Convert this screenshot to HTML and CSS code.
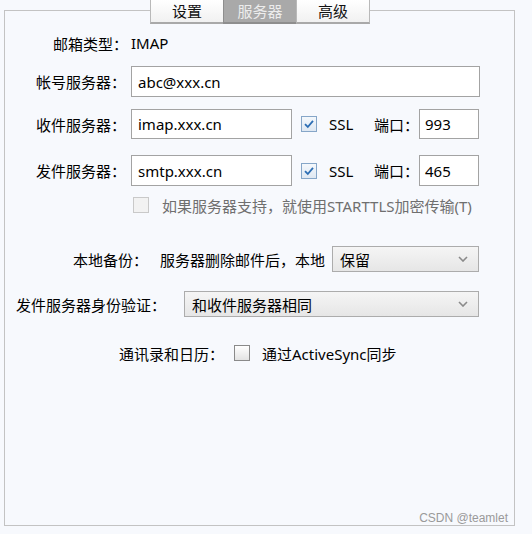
FILE: index.html
```html
<!DOCTYPE html>
<html lang="zh-CN">
<head>
<meta charset="utf-8">
<title>服务器设置</title>
<link rel="stylesheet" href="styles.css">
</head>
<body>
<div class="page">
  <div class="tabs">
    <div class="tab">设置</div>
    <div class="tab active">服务器</div>
    <div class="tab">高级</div>
  </div>
  <div class="frame">
    <div class="row r1">
      <span class="lbl w1">邮箱类型：</span>
      <span class="val">IMAP</span>
    </div>
    <div class="row r2">
      <span class="lbl w1">帐号服务器：</span>
      <div class="input wide h31">abc@xxx.cn</div>
    </div>
    <div class="row r3">
      <span class="lbl w1">收件服务器：</span>
      <div class="input host h30">imap.xxx.cn</div>
      <span class="cb checked"><svg viewBox="0 0 16 16" width="16" height="16"><path d="M4 8.2 L6.8 11 L12 4.8" fill="none" stroke="#2d6eb4" stroke-width="1.8"/></svg></span>
      <span class="ssl">SSL</span>
      <span class="port-lbl">端口：</span>
      <div class="input port h30">993</div>
    </div>
    <div class="row r4">
      <span class="lbl w1">发件服务器：</span>
      <div class="input host h31">smtp.xxx.cn</div>
      <span class="cb checked"><svg viewBox="0 0 16 16" width="16" height="16"><path d="M4 8.2 L6.8 11 L12 4.8" fill="none" stroke="#2d6eb4" stroke-width="1.8"/></svg></span>
      <span class="ssl">SSL</span>
      <span class="port-lbl">端口：</span>
      <div class="input port h31">465</div>
    </div>
    <div class="row r5">
      <span class="cb disabled"></span>
      <span class="dim">如果服务器支持，就使用STARTTLS加密传输(T)</span>
    </div>
    <div class="row r6">
      <span class="lbl w6">本地备份：</span>
      <span class="txt">服务器删除邮件后，本地</span>
      <div class="select sel6"><span>保留</span><svg class="chev" viewBox="0 0 10 6" width="10" height="6"><path d="M1 1 L5 5 L9 1" fill="none" stroke="#8a8a8a" stroke-width="1.6"/></svg></div>
    </div>
    <div class="row r7">
      <span class="lbl w7">发件服务器身份验证：</span>
      <div class="select sel7"><span>和收件服务器相同</span><svg class="chev" viewBox="0 0 10 6" width="10" height="6"><path d="M1 1 L5 5 L9 1" fill="none" stroke="#8a8a8a" stroke-width="1.6"/></svg></div>
    </div>
    <div class="row r8">
      <span class="lbl w8">通讯录和日历：</span>
      <span class="cb plain"></span>
      <span class="txt">通过ActiveSync同步</span>
    </div>
    <div class="mark">CSDN @teamlet</div>
  </div>
</div>
</body>
</html>
```
FILE: styles.css
```css
html, body {
  margin: 0;
  padding: 0;
  background: #f7f9fd;
}
body {
  font-family: "Noto Sans", "Noto Sans CJK SC", sans-serif;
  font-size: 15px;
  color: #000;
  width: 532px;
  height: 534px;
  overflow: hidden;
}
.page {
  padding-left: 4px;
}
.tabs {
  display: flex;
  margin-left: 146px;
  height: 24px;
  margin-bottom: -14px;
  position: relative;
  z-index: 1;
}
.tab {
  box-sizing: border-box;
  width: 74px;
  height: 24px;
  display: flex;
  align-items: center;
  justify-content: center;
  background: linear-gradient(#ffffff, #f1f1f1);
  border: 1px solid #b9b9b9;
  border-top: none;
  border-bottom: 2px solid #a9a9a9;
  margin-left: -1px;
  color: #111;
  font-size: 15px;
  line-height: 1;
}
.tab:first-child { margin-left: 0; width: 74px; }
.tab.active {
  background: #a9a9a9;
  color: #ececec;
  border-color: #8e8e8e;
  border-bottom-color: #8e8e8e;
}
.frame {
  box-sizing: border-box;
  width: 511px;
  height: 516px;
  border: 1px solid #c3c3c3;
  display: flex;
  flex-direction: column;
}
.row {
  display: flex;
  align-items: center;
  flex-shrink: 0;
}
.lbl {
  text-align: right;
  flex-shrink: 0;
}
.w1 { width: 121px; padding-right: 5px; }
.r1 { margin-top: 20px; height: 24px; }
.r1 .lbl { text-align: left; padding-left: 48px; width: 78px; padding-right: 0; }
.r2 { margin-top: 11px; }
.r3 { margin-top: 12px; }
.r4 { margin-top: 16px; }
.r5 { margin-top: 9px; height: 20px; padding-left: 128px; }
.r6 { margin-top: 31px; }
.r7 { margin-top: 19px; }
.r8 { margin-top: 26px; height: 20px; }
.input {
  box-sizing: border-box;
  background: #fff;
  border: 1px solid #a3a3a3;
  padding: 0 6px;
  display: flex;
  align-items: center;
}
.h31 { height: 31px; }
.h30 { height: 30px; }
.wide { width: 349px; }
.host { width: 161px; }
.port { width: 60px; padding-left: 5px; }
.cb {
  box-sizing: border-box;
  width: 16px;
  height: 16px;
  display: inline-flex;
  flex-shrink: 0;
}
.cb.checked {
  border: 1px solid #86a6c8;
  background: linear-gradient(#f4f8fc, #dfe8f2);
  margin-left: 9px;
}
.cb.checked svg { margin: -1px; }
.cb.disabled {
  border: 1px solid #c9c9c9;
  background: #f2f2f2;
  margin-right: 13px;
}
.cb.plain {
  border: 1px solid #8a8a8a;
  background: linear-gradient(#ffffff, #e3e3e3);
  margin-left: 10px;
  margin-right: 12px;
}
.ssl { margin-left: 12px; width: 45px; }
.port-lbl { width: 45px; }
.dim { color: #6f6f6f; }
.w6 { width: 143px; padding-right: 12px; }
.txt { white-space: nowrap; }
.select {
  box-sizing: border-box;
  border: 1px solid #acacac;
  background: linear-gradient(#f5f5f5, #e6e6e6);
  display: flex;
  align-items: center;
  justify-content: space-between;
  padding: 0 10px 0 7px;
}
.sel6 { width: 147px; height: 26px; margin-left: 7px; }
.sel7 { width: 295px; height: 26px; }
.w7 { width: 161px; padding-right: 18px; }
.w8 { width: 219px; }
.chev { flex-shrink: 0; }
.mark {
  margin-top: auto;
  align-self: flex-end;
  font-family: "Liberation Sans", sans-serif;
  font-size: 12px;
  color: #9a9a9a;
  margin-right: 6px;
  line-height: 14px;
}
```
